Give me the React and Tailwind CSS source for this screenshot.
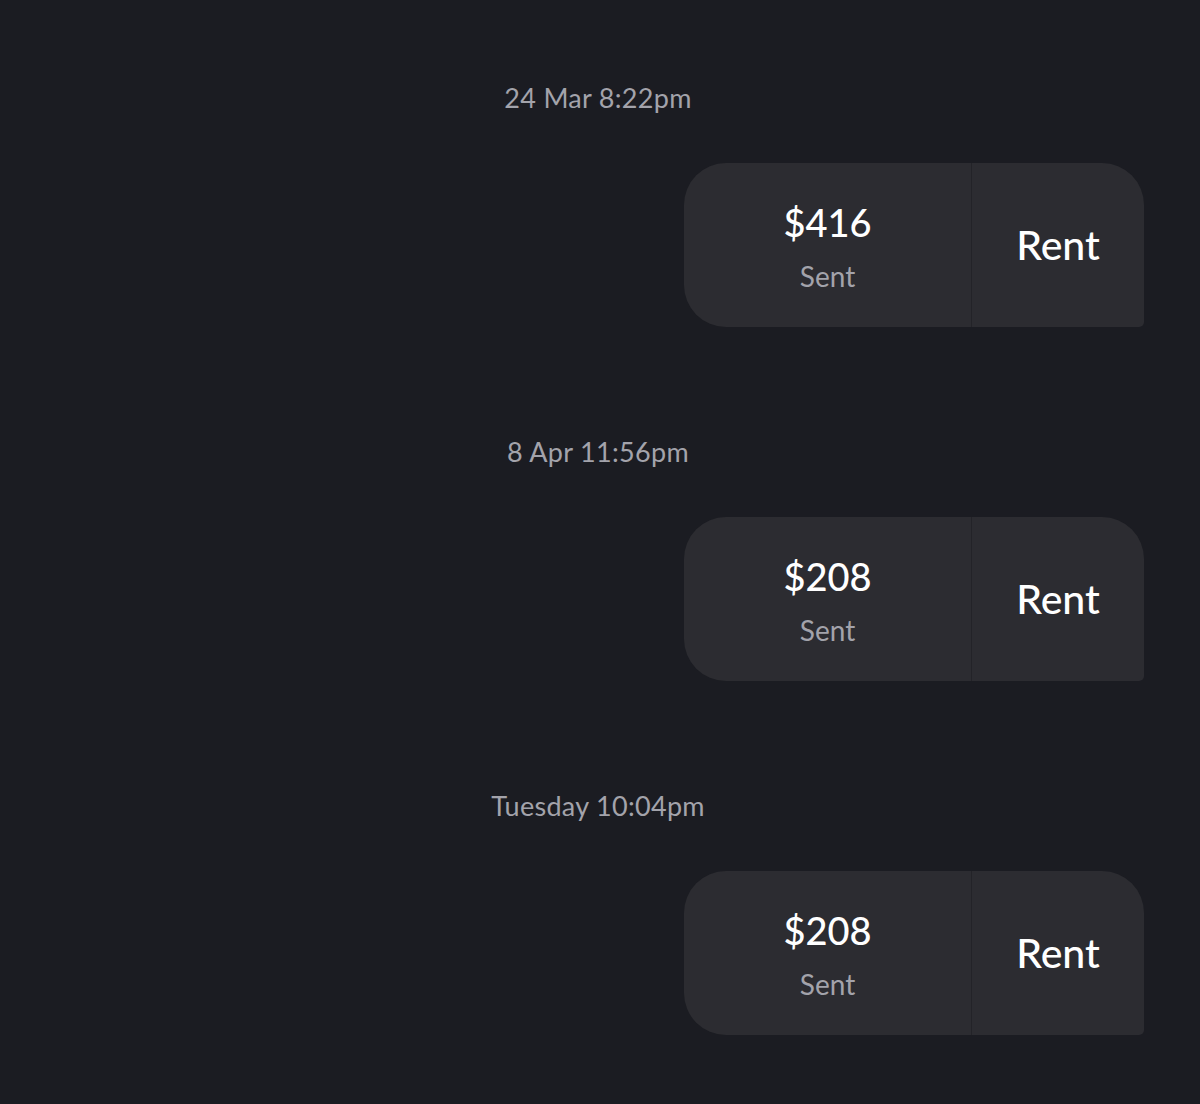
import React from "react";

const items = [
  { time: "24 Mar 8:22pm", amount: "$416" },
  { time: "8 Apr 11:56pm", amount: "$208" },
  { time: "Tuesday 10:04pm", amount: "$208" },
];

export default function App() {
  return (
    <div
      className="w-[1200px] h-[1104px] bg-[#1b1c22] flex flex-col pt-[83px]"
      style={{ fontFamily: "Lato, 'Open Sans', sans-serif" }}
    >
      {items.map((it, i) => (
        <div key={i} className={`flex flex-col ${i < items.length - 1 ? "mb-[110px]" : ""}`}>
          <div className="h-[30px] leading-[30px] text-center text-[27px] text-[#a3a3ab] tracking-[0.3px] pr-[4px]">
            {it.time}
          </div>
          <div className="mt-[50px] flex justify-end pr-[56px]">
            <div className="w-[460px] h-[164px] bg-[#2c2c31] rounded-tl-[42px] rounded-tr-[42px] rounded-bl-[42px] rounded-br-[5px] flex overflow-hidden">
              <div className="w-[288px] flex flex-col items-center pt-[37px] border-r border-[#232328]">
                <div className="text-[38px] leading-[44px] text-white font-medium">{it.amount}</div>
                <div className="text-[28px] leading-[32px] text-[#a3a3ab] mt-[16px]">Sent</div>
              </div>
              <div className="flex-1 flex items-center justify-center">
                <div className="text-[41px] leading-[48px] text-white font-medium">Rent</div>
              </div>
            </div>
          </div>
        </div>
      ))}
    </div>
  );
}
